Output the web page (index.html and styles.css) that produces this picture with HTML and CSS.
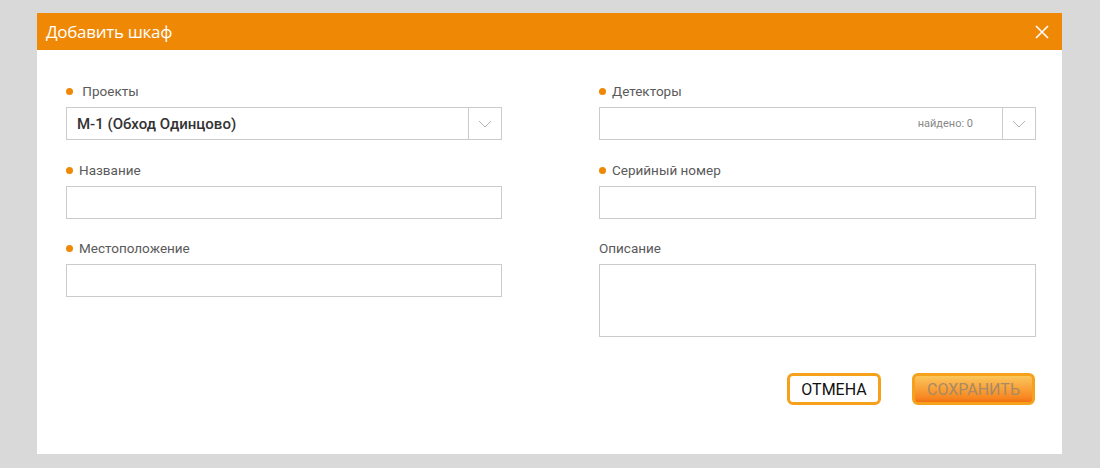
FILE: index.html
```html
<!DOCTYPE html>
<html lang="ru">
<head>
<meta charset="utf-8">
<title>Добавить шкаф</title>
<link rel="stylesheet" href="styles.css">
</head>
<body>
<div class="modal">
  <div class="modal-header">
    <span class="modal-title">Добавить шкаф</span>
    <button class="close" aria-label="Закрыть">
      <svg width="14" height="14" viewBox="0 0 14 14"><path d="M1 1L13 13M13 1L1 13" stroke="#fff" stroke-width="1.6" fill="none"/></svg>
    </button>
  </div>
  <div class="modal-body">
    <div class="grid">
      <div class="col">
        <div class="field">
          <div class="label req">&nbsp;Проекты</div>
          <div class="select">
            <span class="select-value">М-1 (Обход Одинцово)</span>
            <span class="select-arrow"><svg width="14" height="8" viewBox="0 0 14 8"><path d="M1 1L7 7L13 1" stroke="#b5b5b5" stroke-width="1" fill="none"/></svg></span>
          </div>
        </div>
        <div class="field">
          <div class="label req">Название</div>
          <div class="input"></div>
        </div>
        <div class="field">
          <div class="label req">Местоположение</div>
          <div class="input"></div>
        </div>
      </div>
      <div class="col">
        <div class="field">
          <div class="label req">Детекторы</div>
          <div class="select">
            <span class="select-value"></span>
            <span class="found">найдено: 0</span>
            <span class="select-arrow"><svg width="14" height="8" viewBox="0 0 14 8"><path d="M1 1L7 7L13 1" stroke="#b5b5b5" stroke-width="1" fill="none"/></svg></span>
          </div>
        </div>
        <div class="field">
          <div class="label req">Серийный номер</div>
          <div class="input"></div>
        </div>
        <div class="field">
          <div class="label">Описание</div>
          <div class="input textarea"></div>
        </div>
        <div class="actions">
          <button class="btn btn-cancel">ОТМЕНА</button>
          <button class="btn btn-save">СОХРАНИТЬ</button>
        </div>
      </div>
    </div>
  </div>
</div>
</body>
</html>
```

FILE: styles.css
```css
* { box-sizing: border-box; }
html, body { margin: 0; padding: 0; }
body {
  background: #d9d9d9;
  font-family: Roboto, "Liberation Sans", sans-serif;
  height: 468px;
  overflow: hidden;
}
.modal {
  margin: 13px 0 0 37px;
  width: 1025px;
  height: 441px;
  background: #fff;
}
.modal-header {
  height: 37px;
  background: #ef8805;
  display: flex;
  align-items: center;
  justify-content: space-between;
  padding: 0 13px 0 9px;
}
.modal-title {
  color: #fff;
  font-family: "Open Sans", "Noto Sans", sans-serif;
  font-size: 17px;
  letter-spacing: -0.3px;
  line-height: 20px;
}
.close {
  background: none;
  border: 0;
  padding: 0;
  width: 14px;
  height: 14px;
  display: flex;
  cursor: pointer;
}
.modal-body {
  padding: 32px 26px 0 29px;
}
.grid {
  display: grid;
  grid-template-columns: 436px 437px;
  column-gap: 97px;
}
.field { margin-bottom: 20px; }
.field:first-child { margin-bottom: 21px; }
.label {
  font-size: 13.5px;
  line-height: 18px;
  color: #5a5a5a;
  margin-bottom: 7px;
  display: flex;
  align-items: center;
}
.label.req::before {
  content: "";
  width: 7px;
  height: 7px;
  border-radius: 50%;
  background: #ef8805;
  margin-right: 6px;
  flex: none;
}
.input, .select {
  height: 33px;
  border: 1px solid #cbcbcb;
  background: #fff;
}
.textarea { height: 73px; }
.select {
  display: flex;
  align-items: center;
}
.select-value {
  flex: 1;
  padding-left: 10px;
  font-size: 15px;
  font-weight: 500;
  color: #333;
}
.found {
  font-size: 11px;
  color: #888;
  margin-right: 29px;
}
.select-arrow {
  width: 33px;
  height: 100%;
  border-left: 1px solid #cbcbcb;
  display: flex;
  align-items: center;
  justify-content: center;
}
.actions {
  display: flex;
  justify-content: flex-end;
  gap: 31px;
  margin-top: 16px;
  padding-top: 16px;
  padding-right: 1px;
}
.btn {
  height: 32px;
  border: 3px solid #f5a11c;
  border-radius: 6px;
  font-family: Roboto, "Liberation Sans", sans-serif;
  font-size: 16px;
  padding: 0;
}
.btn-cancel {
  width: 94px;
  background: #fff;
  color: #111;
}
.btn-save {
  width: 123px;
  background: linear-gradient(#fbc65c, #f7861f 85%, #f26f12);
  color: #a88a64;
}
```
